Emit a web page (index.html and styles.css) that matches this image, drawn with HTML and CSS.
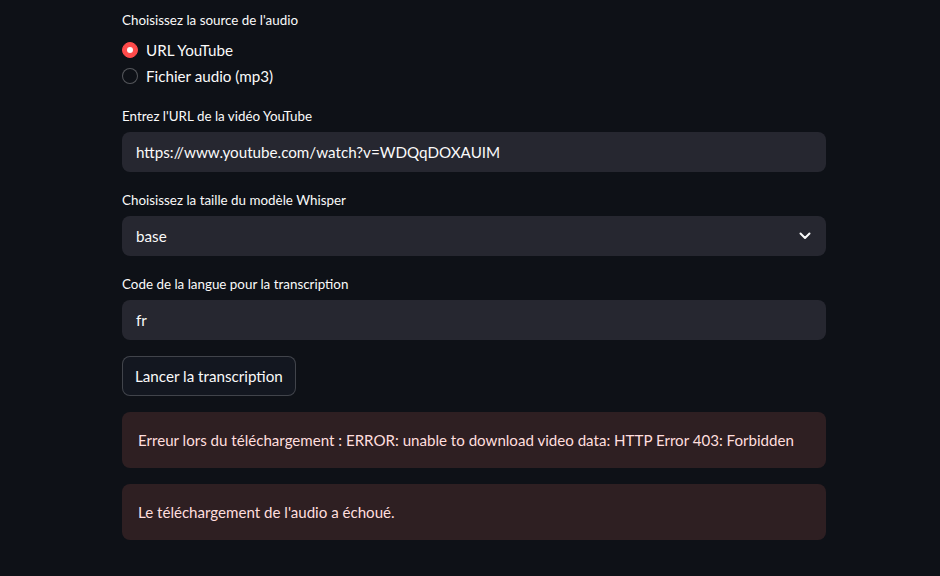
FILE: index.html
```html
<!DOCTYPE html>
<html lang="fr">
<head>
<meta charset="utf-8">
<title>Transcription</title>
<link rel="stylesheet" href="styles.css">
</head>
<body>
<main class="main">
  <section class="block">
    <div class="label">Choisissez la source de l'audio</div>
    <div class="radio-group">
      <label class="radio-row"><span class="radio radio-on"><span class="dot"></span></span><span>URL YouTube</span></label>
      <label class="radio-row"><span class="radio"></span><span>Fichier audio (mp3)</span></label>
    </div>
  </section>
  <section class="block">
    <div class="label label-tight">Entrez l'URL de la vidéo YouTube</div>
    <div class="field">https://www.youtube.com/watch?v=WDQqDOXAUIM</div>
  </section>
  <section class="block">
    <div class="label label-tight">Choisissez la taille du modèle Whisper</div>
    <div class="field select">
      <span>base</span>
      <svg class="chev" width="12" height="8" viewBox="0 0 12 8"><path d="M1.5 1.5 L6 6 L10.5 1.5" fill="none" stroke="#fafafa" stroke-width="2" stroke-linecap="round" stroke-linejoin="round"/></svg>
    </div>
  </section>
  <section class="block">
    <div class="label label-tight">Code de la langue pour la transcription</div>
    <div class="field">fr</div>
  </section>
  <div class="btn-row"><button class="btn">Lancer la transcription</button></div>
  <div class="alert">Erreur lors du téléchargement : ERROR: unable to download video data: HTTP Error 403: Forbidden</div>
  <div class="alert">Le téléchargement de l'audio a échoué.</div>
</main>
</body>
</html>
```
FILE: styles.css
```css
html, body {
  margin: 0;
  padding: 0;
  background: #0e1117;
  color: #fafafa;
  font-family: "Lato", "Noto Sans", sans-serif;
}
.main {
  width: 704px;
  margin-left: 122px;
  padding-top: 8px;
  display: flex;
  flex-direction: column;
  gap: 16px;
}
.block {
  display: flex;
  flex-direction: column;
}
.label {
  font-size: 13.4px;
  height: 24px;
  line-height: 24px;
  margin-bottom: 6px;
}
.label-tight {
  margin-bottom: 4px;
}
.radio-group {
  display: flex;
  flex-direction: column;
  gap: 2px;
}
.radio-row {
  display: flex;
  align-items: center;
  gap: 8px;
  height: 24px;
  font-size: 15.2px;
}
.radio {
  width: 16px;
  height: 16px;
  box-sizing: border-box;
  border-radius: 50%;
  border: 1px solid rgba(250, 250, 250, 0.3);
  background: #0e1117;
  display: flex;
  align-items: center;
  justify-content: center;
}
.radio-on {
  background: #ff4b4b;
  border-color: #ff4b4b;
}
.dot {
  width: 6px;
  height: 6px;
  border-radius: 50%;
  background: #fafafa;
}
.field {
  height: 40px;
  box-sizing: border-box;
  background: #262730;
  border-radius: 8px;
  padding: 0 14px 1px;
  display: flex;
  align-items: center;
  font-size: 15.2px;
}
.select {
  justify-content: space-between;
  padding-right: 14px;
}
.chev {
  margin-right: 1px;
}
.btn-row {
  display: flex;
}
.btn {
  height: 40px;
  padding: 0 12px 1px;
  border: 1px solid rgba(250, 250, 250, 0.2);
  border-radius: 8px;
  background: #131720;
  color: #fafafa;
  font-family: inherit;
  font-size: 15.2px;
}
.alert {
  background: #2e1f22;
  color: #ffdede;
  border-radius: 8px;
  padding: 16px;
  font-size: 15.1px;
  line-height: 24px;
}
```
